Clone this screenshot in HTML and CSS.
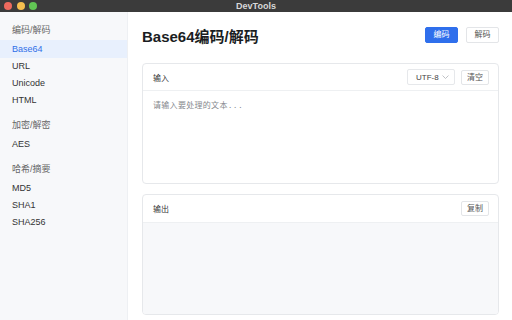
FILE: index.html
```html
<!DOCTYPE html>
<html lang="zh-CN">

<head>
    <meta charset="UTF-8">
    <meta name="viewport" content="width=device-width, initial-scale=1.0">
    <title>DevTools</title>
    <link rel="stylesheet" href="styles.css">
</head>

<body>
    <div class="titlebar">
        <div class="lights">
            <span class="light red"></span>
            <span class="light yellow"></span>
            <span class="light green"></span>
        </div>
        <div class="app-title">DevTools</div>
    </div>

    <div class="app">
        <aside class="sidebar">
            <div class="group-label">编码/解码</div>
            <div class="nav-item active">Base64</div>
            <div class="nav-item">URL</div>
            <div class="nav-item">Unicode</div>
            <div class="nav-item">HTML</div>

            <div class="group-label">加密/解密</div>
            <div class="nav-item">AES</div>

            <div class="group-label">哈希/摘要</div>
            <div class="nav-item">MD5</div>
            <div class="nav-item">SHA1</div>
            <div class="nav-item">SHA256</div>
        </aside>

        <main class="main">
            <div class="page-head">
                <h1>Base64编码/解码</h1>
                <div class="actions">
                    <button class="btn primary">编码</button>
                    <button class="btn">解码</button>
                </div>
            </div>

            <section class="card input-card">
                <div class="card-head">
                    <span class="card-title">输入</span>
                    <div class="tools">
                        <div class="select">
                            <span>UTF-8</span>
                            <svg width="7" height="4" viewBox="0 0 7 4"><path d="M0.5 0.5 L3.5 3.5 L6.5 0.5" fill="none" stroke="#b0b3b8" stroke-width="0.8"/></svg>
                        </div>
                        <button class="btn small">清空</button>
                    </div>
                </div>
                <div class="card-body">
                    <div class="placeholder">请输入要处理的文本...</div>
                </div>
            </section>

            <section class="card output-card">
                <div class="card-head">
                    <span class="card-title">输出</span>
                    <button class="btn small">复制</button>
                </div>
                <div class="card-body output"></div>
            </section>
        </main>
    </div>
</body>

</html>
```

FILE: styles.css
```css
* {
    box-sizing: border-box;
}

body {
    margin: 0;
    width: 512px;
    height: 320px;
    overflow: hidden;
    font-family: "Liberation Sans", "Noto Sans CJK SC", sans-serif;
    color: #333;
    background: #fff;
}

.titlebar {
    height: 12px;
    background: #3b3b3b;
    display: flex;
    align-items: center;
    position: relative;
}

.lights {
    display: flex;
    gap: 4.5px;
    padding-left: 4px;
}

.light {
    width: 8px;
    height: 8px;
    border-radius: 50%;
}

.red {
    background: #ed6a5e;
}

.yellow {
    background: #f5bf4f;
}

.green {
    background: #61c554;
}

.app-title {
    position: absolute;
    left: 0;
    right: 0;
    text-align: center;
    font-size: 9px;
    font-weight: bold;
    color: #d8d8d8;
    line-height: 12px;
}

.app {
    display: flex;
    height: 308px;
}

.sidebar {
    width: 128px;
    background: #f7f8fa;
    border-right: 1px solid #eef0f3;
    padding-top: 8px;
}

.group-label {
    font-size: 9px;
    color: #666;
    padding: 0 12px;
    height: 20px;
    line-height: 20px;
    margin-top: 6px;
}

.group-label:first-child {
    margin-top: 0;
}

.nav-item {
    font-size: 9px;
    color: #333;
    padding: 0 12px;
    height: 17px;
    line-height: 17px;
}

.group-label + .nav-item {
    margin-top: 1px;
}

.nav-item.active {
    background: #e8f0fd;
    color: #2f6fe8;
    height: 18px;
    line-height: 18px;
    margin-top: 0;
}

.group-label:nth-of-type(3) ~ .nav-item {
    height: 17.5px;
    line-height: 17.5px;
}

.main {
    flex: 1;
    padding: 14px 13px 5px 14px;
    display: flex;
    flex-direction: column;
}

.page-head {
    display: flex;
    justify-content: space-between;
    align-items: center;
    height: 16px;
    margin-top: 1px;
    margin-bottom: 20px;
}

h1 {
    margin: 0;
    font-size: 15px;
    font-weight: bold;
    color: #1a1d22;
}

.actions {
    display: flex;
    gap: 8px;
}

.btn {
    font-family: inherit;
    font-size: 8px;
    height: 16px;
    padding: 0 7px;
    border: 1px solid #e3e5e8;
    border-radius: 2px;
    background: #fff;
    color: #555;
    line-height: 14px;
}

.btn.primary {
    background: #2f6fec;
    border-color: #2f6fec;
    color: #fff;
}

.actions .btn {
    width: 33px;
    padding: 0;
}

.btn.small {
    height: 15px;
    padding: 0 5px;
}

.card {
    border: 1px solid #e6e8eb;
    border-radius: 4px;
    display: flex;
    flex-direction: column;
    overflow: hidden;
}

.card-head {
    height: 27px;
    display: flex;
    justify-content: space-between;
    align-items: center;
    padding: 0 9px 0 10px;
    border-bottom: 1px solid #eef0f2;
}

.card-title {
    font-size: 8px;
    color: #333;
}

.tools {
    display: flex;
    gap: 6px;
    align-items: center;
}

.select {
    width: 48px;
    height: 16px;
    border: 1px solid #e6e8eb;
    border-radius: 2px;
    display: flex;
    align-items: center;
    justify-content: space-between;
    padding: 0 5px 0 8px;
    font-size: 8px;
    color: #444;
}

.input-card {
    height: 121px;
}

.card-body {
    flex: 1;
    padding: 9px 10px;
}

.placeholder {
    font-family: "Liberation Mono", "Noto Sans CJK SC", monospace;
    font-size: 8px;
    letter-spacing: 0.3px;
    line-height: 11px;
    color: #85888d;
}

.output-card {
    margin-top: 10px;
    flex: 1;
}

.output-card .card-head {
    height: 28px;
}

.output {
    background: #f7f8fa;
}
```
